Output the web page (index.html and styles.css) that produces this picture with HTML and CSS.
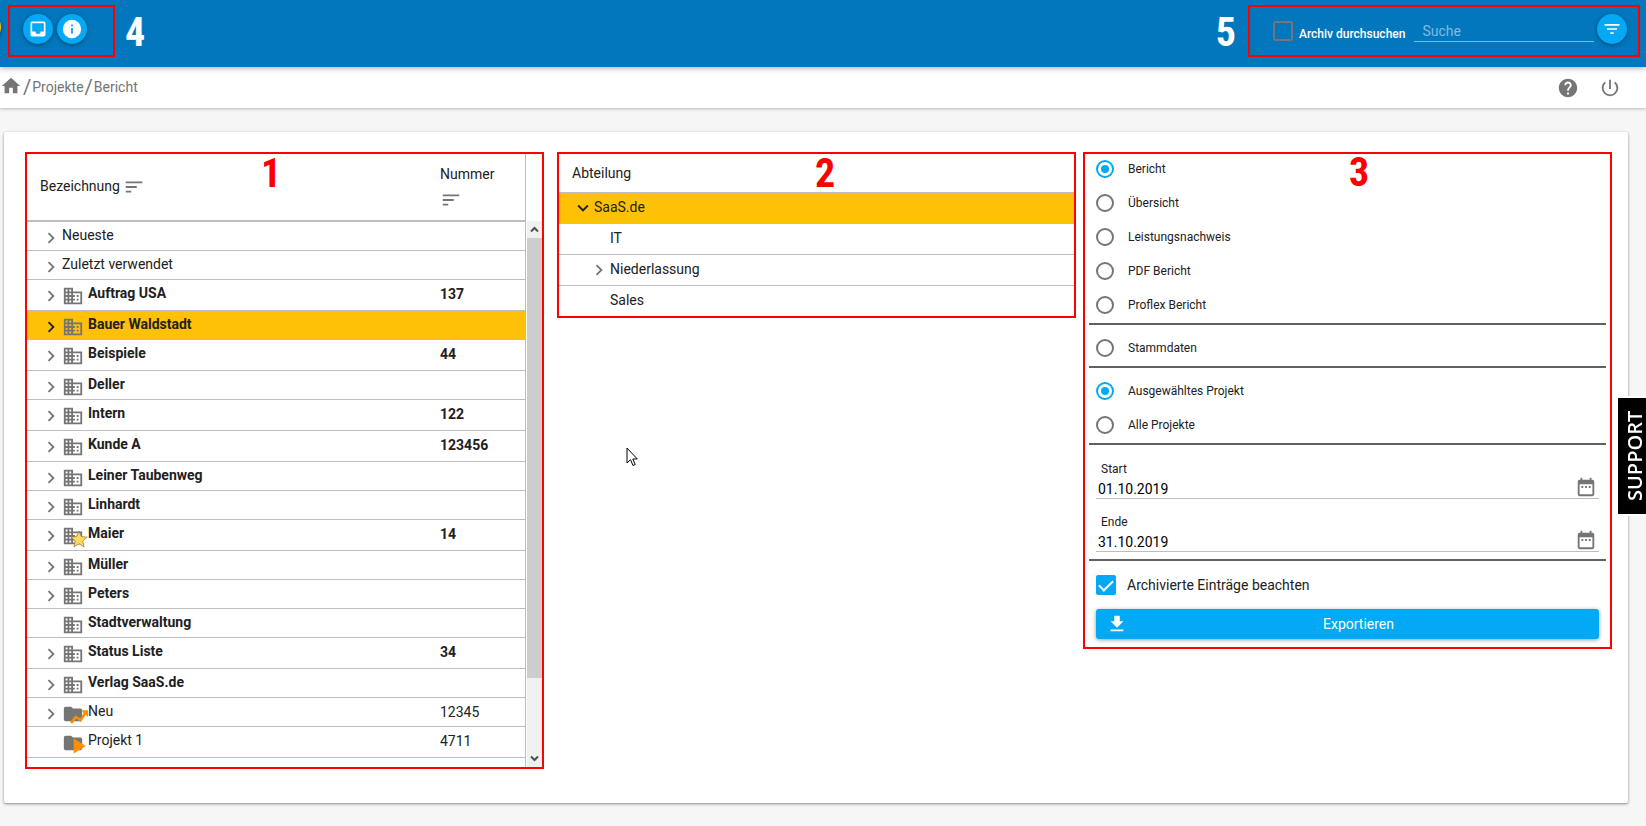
FILE: index.html
```html
<!DOCTYPE html>
<html lang="de">
<head>
<meta charset="utf-8">
<title>Bericht</title>
<link rel="stylesheet" href="styles.css">
</head>
<body>
<svg class="sprite" aria-hidden="true">
  <symbol id="inbox" viewBox="0 0 24 24"><path d="M19 3H5a2 2 0 0 0-2 2v14a2 2 0 0 0 2 2h14a2 2 0 0 0 2-2V5a2 2 0 0 0-2-2zm0 12h-4a3 3 0 0 1-6 0H5V5h14v10z"/></symbol>
  <symbol id="info" viewBox="0 0 24 24"><path d="M12 2a10 10 0 1 0 0 20 10 10 0 0 0 0-20zm1 15h-2v-6h2v6zm0-8h-2V7h2v2z"/></symbol>
  <symbol id="filter" viewBox="0 0 24 24"><path d="M10 18h4v-2h-4v2zM3 6v2h18V6H3zm3 7h12v-2H6v2z"/></symbol>
  <symbol id="home" viewBox="0 0 24 24"><path d="M10 20v-6h4v6h5v-8h3L12 3 2 12h3v8z"/></symbol>
  <symbol id="help" viewBox="0 0 24 24"><path d="M12 2C6.480 2 2 6.480 2 12s4.480 10 10 10 10-4.480 10-10S17.520 2 12 2zm1 17h-2v-2h2v2zm2.070-7.750l-.9.920C13.450 12.900 13 13.500 13 15h-2v-.5c0-1.100.450-2.100 1.170-2.830l1.240-1.260c.370-.360.590-.860.590-1.410 0-1.100-.9-2-2-2s-2 .9-2 2H8c0-2.210 1.790-4 4-4s4 1.790 4 4c0 .880-.360 1.680-.930 2.250z"/></symbol>
  <symbol id="power" viewBox="0 0 24 24"><path d="M13 3h-2v10h2V3zm4.830 2.170l-1.420 1.420A6.920 6.920 0 0 1 19 12a7 7 0 1 1-11.420-5.420L6.170 5.170A8.930 8.930 0 0 0 3 12a9 9 0 0 0 18 0c0-2.740-1.230-5.180-3.170-6.830z"/></symbol>
  <symbol id="sort" viewBox="0 0 24 24"><path d="M3 18h6v-2H3v2zM3 6v2h18V6H3zm0 7h12v-2H3v2z"/></symbol>
  <symbol id="right" viewBox="0 0 24 24"><path d="M10 6L8.590 7.410 13.170 12l-4.580 4.590L10 18l6-6z"/></symbol>
  <symbol id="down" viewBox="0 0 24 24"><path d="M16.590 8.590L12 13.170 7.410 8.590 6 10l6 6 6-6z"/></symbol>
  <symbol id="company" viewBox="0 0 24 24"><path d="M12 7V3H2v18h20V7H12zM6 19H4v-2h2v2zm0-4H4v-2h2v2zm0-4H4V9h2v2zm0-4H4V5h2v2zm4 12H8v-2h2v2zm0-4H8v-2h2v2zm0-4H8V9h2v2zm0-4H8V5h2v2zm10 12h-8v-2h2v-2h-2v-2h2v-2h-2V9h8v10zm-2-8h-2v2h2v-2zm0 4h-2v2h2v-2z"/></symbol>
  <symbol id="folder" viewBox="0 0 24 24"><path d="M10 4H4a2 2 0 0 0-2 2v12a2 2 0 0 0 2 2h16a2 2 0 0 0 2-2V8a2 2 0 0 0-2-2h-8l-2-2z"/></symbol>
  <symbol id="star" viewBox="0 0 24 24"><path d="M12 1.500l3.100 7.300 7.900.7-6 5.200 1.800 7.800-6.800-4.100-6.800 4.100L7 14.700 1 9.500l7.900-.7z"/></symbol>
  <symbol id="trend" viewBox="0 0 24 24"><path d="M15 3h9v9l-3-3-6.500 9.500-6-4.500L3 21l-3-2 7.500-9.500 6.200 4.500 4.500-7.500z"/></symbol>
  <symbol id="play" viewBox="0 0 24 24"><path d="M5 2v20l16-10z"/></symbol>
  <symbol id="calendar" viewBox="0 0 24 24"><path d="M9 11H7v2h2v-2zm4 0h-2v2h2v-2zm4 0h-2v2h2v-2zm2-7h-1V2h-2v2H8V2H6v2H5a2 2 0 0 0-2 2v14a2 2 0 0 0 2 2h14a2 2 0 0 0 2-2V6a2 2 0 0 0-2-2zm0 16H5V9h14v11z"/></symbol>
  <symbol id="download" viewBox="0 0 24 24"><path d="M19 9h-4V3H9v6H5l7 7 7-7zM5 18v2h14v-2H5z"/></symbol>
</svg>

<header class="topbar">
  <span class="edge-dot"></span>
  <div class="frame frame-actions">
    <button class="round" aria-label="Posteingang"><svg class="icon-20"><use href="#inbox"/></svg></button>
    <button class="round" aria-label="Information"><svg class="icon-22"><use href="#info"/></svg></button>
  </div>
  <span class="mark">4</span>
  <span class="mark mark-end">5</span>
  <form class="frame frame-search">
    <input class="check archive-check" type="checkbox" id="archive">
    <label class="archive-label" for="archive">Archiv durchsuchen</label>
    <input class="search" type="text" placeholder="Suche" aria-label="Suche">
    <button class="round" type="button" aria-label="Filter"><svg class="icon-20"><use href="#filter"/></svg></button>
  </form>
</header>

<nav class="crumbs">
  <a class="crumb-home" href="#" aria-label="Start"><svg class="icon-22"><use href="#home"/></svg></a>
  <span class="slash">/</span><a href="#">Projekte</a><span class="slash">/</span><a href="#">Bericht</a>
  <div class="crumb-tools">
    <button class="plain" aria-label="Hilfe"><svg class="icon-22"><use href="#help"/></svg></button>
    <button class="plain" aria-label="Abmelden"><svg class="icon-22"><use href="#power"/></svg></button>
  </div>
</nav>

<main class="card">
  <section class="panel panel-projects">
    <span class="panel-mark mark-projects">1</span>
    <div class="table-wrap">
      <table class="tree">
        <thead>
          <tr>
            <th>Bezeichnung <svg class="icon-22 sort"><use href="#sort"/></svg></th>
            <th class="num">Nummer<svg class="icon-22 sort below"><use href="#sort"/></svg></th>
          </tr>
        </thead>
        <tbody>
          <tr><td><div class="branch"><button class="plain" aria-label="Aufklappen"><svg class="icon-22"><use href="#right"/></svg></button>Neueste</div></td><td></td></tr>
          <tr><td><div class="branch"><button class="plain" aria-label="Aufklappen"><svg class="icon-22"><use href="#right"/></svg></button>Zuletzt verwendet</div></td><td></td></tr>
          <tr class="bold tall"><td><div class="branch"><button class="plain" aria-label="Aufklappen"><svg class="icon-22"><use href="#right"/></svg></button><span class="kind"><svg class="icon-22"><use href="#company"/></svg></span>Auftrag USA</div></td><td>137</td></tr>
          <tr class="bold selected"><td><div class="branch"><button class="plain" aria-label="Aufklappen"><svg class="icon-22"><use href="#right"/></svg></button><span class="kind"><svg class="icon-22"><use href="#company"/></svg></span>Bauer Waldstadt</div></td><td></td></tr>
          <tr class="bold tall"><td><div class="branch"><button class="plain" aria-label="Aufklappen"><svg class="icon-22"><use href="#right"/></svg></button><span class="kind"><svg class="icon-22"><use href="#company"/></svg></span>Beispiele</div></td><td>44</td></tr>
          <tr class="bold"><td><div class="branch"><button class="plain" aria-label="Aufklappen"><svg class="icon-22"><use href="#right"/></svg></button><span class="kind"><svg class="icon-22"><use href="#company"/></svg></span>Deller</div></td><td></td></tr>
          <tr class="bold tall"><td><div class="branch"><button class="plain" aria-label="Aufklappen"><svg class="icon-22"><use href="#right"/></svg></button><span class="kind"><svg class="icon-22"><use href="#company"/></svg></span>Intern</div></td><td>122</td></tr>
          <tr class="bold tall"><td><div class="branch"><button class="plain" aria-label="Aufklappen"><svg class="icon-22"><use href="#right"/></svg></button><span class="kind"><svg class="icon-22"><use href="#company"/></svg></span>Kunde A</div></td><td>123456</td></tr>
          <tr class="bold"><td><div class="branch"><button class="plain" aria-label="Aufklappen"><svg class="icon-22"><use href="#right"/></svg></button><span class="kind"><svg class="icon-22"><use href="#company"/></svg></span>Leiner Taubenweg</div></td><td></td></tr>
          <tr class="bold"><td><div class="branch"><button class="plain" aria-label="Aufklappen"><svg class="icon-22"><use href="#right"/></svg></button><span class="kind"><svg class="icon-22"><use href="#company"/></svg></span>Linhardt</div></td><td></td></tr>
          <tr class="bold tall"><td><div class="branch"><button class="plain" aria-label="Aufklappen"><svg class="icon-22"><use href="#right"/></svg></button><span class="kind"><svg class="icon-22"><use href="#company"/></svg><svg class="badge star"><use href="#star"/></svg></span>Maier</div></td><td>14</td></tr>
          <tr class="bold"><td><div class="branch"><button class="plain" aria-label="Aufklappen"><svg class="icon-22"><use href="#right"/></svg></button><span class="kind"><svg class="icon-22"><use href="#company"/></svg></span>Müller</div></td><td></td></tr>
          <tr class="bold"><td><div class="branch"><button class="plain" aria-label="Aufklappen"><svg class="icon-22"><use href="#right"/></svg></button><span class="kind"><svg class="icon-22"><use href="#company"/></svg></span>Peters</div></td><td></td></tr>
          <tr class="bold"><td><div class="branch leaf"><span class="kind"><svg class="icon-22"><use href="#company"/></svg></span>Stadtverwaltung</div></td><td></td></tr>
          <tr class="bold tall"><td><div class="branch"><button class="plain" aria-label="Aufklappen"><svg class="icon-22"><use href="#right"/></svg></button><span class="kind"><svg class="icon-22"><use href="#company"/></svg></span>Status Liste</div></td><td>34</td></tr>
          <tr class="bold"><td><div class="branch"><button class="plain" aria-label="Aufklappen"><svg class="icon-22"><use href="#right"/></svg></button><span class="kind"><svg class="icon-22"><use href="#company"/></svg></span>Verlag SaaS.de</div></td><td></td></tr>
          <tr><td><div class="branch"><button class="plain" aria-label="Aufklappen"><svg class="icon-22"><use href="#right"/></svg></button><span class="kind"><svg class="icon-22"><use href="#folder"/></svg><svg class="badge orange"><use href="#trend"/></svg></span>Neu</div></td><td>12345</td></tr>
          <tr class="tall"><td><div class="branch leaf"><span class="kind"><svg class="icon-22"><use href="#folder"/></svg><svg class="badge orange"><use href="#play"/></svg></span>Projekt 1</div></td><td>4711</td></tr>
          <tr><td></td><td></td></tr>
        </tbody>
      </table>
    </div>
    <div class="scrollbar">
      <svg class="arrow" viewBox="0 0 15 17"><path d="M4 10.500l3.500-3.500 3.500 3.500"/></svg>
      <div class="track"><div class="thumb"></div></div>
      <svg class="arrow" viewBox="0 0 15 17"><path d="M4 6.500l3.500 3.500 3.500-3.500"/></svg>
    </div>
  </section>

  <section class="panel panel-units">
    <span class="panel-mark mark-units">2</span>
    <table class="tree units">
      <thead><tr><th>Abteilung</th></tr></thead>
      <tbody>
        <tr class="selected"><td><div class="branch"><button class="plain" aria-label="Zuklappen"><svg class="icon-22"><use href="#down"/></svg></button>SaaS.de</div></td></tr>
        <tr><td><div class="branch child leaf">IT</div></td></tr>
        <tr><td><div class="branch child"><button class="plain" aria-label="Aufklappen"><svg class="icon-22"><use href="#right"/></svg></button>Niederlassung</div></td></tr>
        <tr><td><div class="branch child leaf">Sales</div></td></tr>
      </tbody>
    </table>
  </section>

  <form class="panel panel-report">
    <span class="panel-mark mark-report">3</span>
    <div class="group options first">
      <label class="option"><input type="radio" name="kind" checked>Bericht</label>
      <label class="option"><input type="radio" name="kind">Übersicht</label>
      <label class="option"><input type="radio" name="kind">Leistungsnachweis</label>
      <label class="option"><input type="radio" name="kind">PDF Bericht</label>
      <label class="option"><input type="radio" name="kind">Proflex Bericht</label>
    </div>
    <div class="group options">
      <label class="option"><input type="radio" name="kind">Stammdaten</label>
    </div>
    <div class="group options">
      <label class="option"><input type="radio" name="scope" checked>Ausgewähltes Projekt</label>
      <label class="option"><input type="radio" name="scope">Alle Projekte</label>
    </div>
    <div class="group dates">
      <div class="field">
        <label for="start">Start</label>
        <div class="field-line"><input type="text" id="start" value="01.10.2019"><button class="plain" type="button" aria-label="Kalender"><svg class="icon-22"><use href="#calendar"/></svg></button></div>
      </div>
      <div class="field">
        <label for="end">Ende</label>
        <div class="field-line"><input type="text" id="end" value="31.10.2019"><button class="plain" type="button" aria-label="Kalender"><svg class="icon-22"><use href="#calendar"/></svg></button></div>
      </div>
    </div>
    <div class="finish">
      <label class="archived"><input class="check" type="checkbox" checked>Archivierte Einträge beachten</label>
      <button class="export" type="button"><svg class="icon-22"><use href="#download"/></svg><span>Exportieren</span></button>
    </div>
  </form>
</main>

<a class="support" href="#">SUPPORT</a>
<svg class="cursor" viewBox="0 0 12 20"><path d="M1 1v15l3.500-3.300L7 18.500l2.200-1L6.800 12h4.500z"/></svg>
</body>
</html>
```
FILE: styles.css
```css
* { box-sizing: border-box; }

body {
  margin: 0;
  min-height: 100vh;
  background: #f6f6f6;
  color: #212121;
  font: 14px/20px Roboto, "Liberation Sans", sans-serif;
  overflow: hidden;
}

button, input { font: inherit; color: inherit; }
button { border: 0; padding: 0; cursor: pointer; }
a { color: inherit; text-decoration: none; }
svg { fill: currentColor; flex: none; display: block; }

.sprite { position: absolute; width: 0; height: 0; }
.icon-20 { width: 20px; height: 20px; }
.icon-22 { width: 22px; height: 22px; }
.plain { background: none; color: #757575; display: flex; }

/* Top bar */
.topbar {
  position: relative;
  z-index: 1;
  display: flex;
  align-items: flex-start;
  height: 67px;
  padding: 5px 6px 0 8px;
  background: #0277bd;
  color: #fff;
  box-shadow: 0 1px 6px rgba(0, 0, 0, .35);
}
.edge-dot {
  position: absolute;
  left: -29px;
  top: 12px;
  width: 30px;
  height: 30px;
  border-radius: 50%;
  background: #ffc107;
  box-shadow: 0 2px 4px rgba(0, 0, 0, .4);
}
.frame {
  display: flex;
  align-items: center;
  height: 52px;
  border: 2px solid #f00;
}
.frame-actions { width: 107px; gap: 4px; padding: 0 0 4px 13px; }
.frame-search { width: 392px; padding: 0 11px 4px 23px; }
.round {
  display: flex;
  align-items: center;
  justify-content: center;
  flex: none;
  width: 30px;
  height: 30px;
  border-radius: 50%;
  background: #03a9f4;
  color: #fff;
  box-shadow: 0 1px 4px rgba(0, 0, 0, .4);
}
.mark, .panel-mark {
  font: bold 40px/52px "Roboto Condensed", Roboto, sans-serif;
}
.mark { margin-left: 10px; line-height: 56px; }
.mark-end { margin-left: auto; margin-right: 12px; }

.check {
  appearance: none;
  flex: none;
  width: 20px;
  height: 20px;
  margin: 0;
  border: 2px solid #757575;
  border-radius: 2px;
}
.check:checked {
  display: grid;
  place-items: center;
  border-color: #03a9f4;
  background: #03a9f4;
}
.check:checked::after {
  content: "";
  width: 6px;
  height: 12px;
  margin-bottom: 3px;
  border: solid #fff;
  border-width: 0 2px 2px 0;
  transform: rotate(45deg);
}
.archive-check { margin-top: 4px; }
.archive-label { margin: 10px 9px 0 6px; font-size: 12px; font-weight: 500; white-space: nowrap; }
.search {
  flex: 1;
  min-width: 0;
  height: 24px;
  margin: 2px 3px 0 0;
  padding: 3px 8px 0;
  border: 0;
  border-bottom: 1px solid #81bbde;
  background: none;
  outline: 0;
}
.search::placeholder { color: #81bbde; opacity: 1; }

/* Breadcrumbs */
.crumbs {
  display: flex;
  align-items: center;
  height: 41px;
  padding: 0 25px 2px 0;
  background: #fff;
  color: #757575;
  box-shadow: 0 1px 3px rgba(0, 0, 0, .25);
}
.crumb-home { padding-bottom: 2px; }
.slash { padding: 0 1px; font-size: 20px; }
.crumb-tools { display: flex; gap: 20px; margin: 2px 0 0 auto; }

/* Card and panels */
.card {
  display: grid;
  grid-template-columns: 519fr 519fr 529fr;
  column-gap: 10px;
  align-items: start;
  margin: 24px 18px 0 4px;
  padding: 20px 16px 34px 21px;
  border-radius: 2px;
  background: #fff;
  box-shadow: 0 1px 3px rgba(0, 0, 0, .45);
}
.panel { position: relative; border: 2px solid #f00; }
.panel-mark { position: absolute; top: -6px; z-index: 1; color: #f00; }
.mark-projects { left: 234px; }
.mark-units { left: 256px; }
.mark-report { left: 264px; top: -7px; }

.panel-projects {
  display: flex;
  height: calc(100vh - 209px);
}
.panel-units { margin-left: 3px; margin-right: -3px; }
.table-wrap { flex: 1; overflow: hidden; border-right: 1px solid #bdbdbd; }
.tree { width: 100%; border-collapse: separate; border-spacing: 0; }
.tree th {
  height: 68px;
  padding: 0 13px;
  border-bottom: 2px solid #bdbdbd;
  font-weight: 400;
  text-align: left;
}
.tree .num { width: 98px; }
.sort { display: inline-block; vertical-align: middle; color: #757575; }
.below { display: block; margin-top: 5px; }
.tree td {
  height: 29px;
  padding: 0 13px;
  border-bottom: 1px solid #bdbdbd;
  line-height: 28px;
  vertical-align: top;
}
.tree .tall td { height: 31px; }
.tree .bold { font-weight: 700; }
.tree .selected { background: #ffc107; }
.branch { display: flex; align-items: center; height: 27px; line-height: 27px; }
.branch > .plain, .kind { margin-top: 5px; }
.leaf { padding-left: 22px; }
.selected .plain { color: #212121; }
.kind { position: relative; margin-right: 4px; color: #757575; }
.badge { position: absolute; left: 8px; top: 5px; width: 18px; height: 18px; }
.star { color: #ffd95a; stroke: #8d7b4a; stroke-width: 1px; }
.orange { color: #ff8f00; }

.scrollbar {
  display: flex;
  flex-direction: column;
  width: 15px;
  margin: 67px 0 0 1px;
  background: #f0f0f0;
}
.arrow { width: 15px; height: 17px; fill: none; stroke: #505050; stroke-width: 2px; }
.track { flex: 1; }
.thumb { height: 86%; background: #cdcdcd; }

.units th { height: 39px; border-bottom-width: 1px; }
.units td { height: 31px; }
.units tr:last-child td { height: 30px; border-bottom: 0; }
.units .branch { height: 28px; }
.units .branch > .plain { margin-top: 2px; }
.units .child { padding-left: 16px; }
.units .child.leaf { padding-left: 38px; }

/* Report form */
.panel-report { padding: 0 4px 8px; }
.group {
  padding: 0 7px;
  border-bottom: 2px solid #616161;
}
.options { display: grid; gap: 14px; padding-top: 13px; padding-bottom: 8px; }
.first { padding-top: 5px; }
.option {
  display: flex;
  align-items: center;
  gap: 14px;
  font-size: 12px;
}
.option input {
  display: grid;
  place-items: center;
  appearance: none;
  width: 18px;
  height: 18px;
  margin: 0;
  border: 2px solid #757575;
  border-radius: 50%;
}
.option input:checked { border-color: #03a9f4; }
.option input:checked::after {
  content: "";
  width: 8px;
  height: 8px;
  border-radius: 50%;
  background: #03a9f4;
}
.dates { display: grid; gap: 13px; padding-top: 14px; padding-bottom: 7px; }
.field label { display: block; padding-left: 5px; font-size: 12px; }
.field-line {
  display: flex;
  align-items: center;
  height: 20px;
  border-bottom: 1px solid #bdbdbd;
}
.field-line input {
  flex: 1;
  min-width: 0;
  padding: 0 2px;
  border: 0;
  background: none;
  color: #000;
  outline: 0;
}
.field-line .plain { margin: 0 2px 3px 0; }
.finish { padding: 14px 7px 0; }
.archived { display: flex; align-items: center; gap: 11px; }
.export {
  display: flex;
  align-items: center;
  width: 100%;
  height: 30px;
  margin-top: 14px;
  padding: 0 10px;
  border-radius: 3px;
  background: #03a9f4;
  color: #fff;
  box-shadow: 0 1px 4px rgba(0, 0, 0, .4);
}
.export span { flex: 1; }

.support {
  position: fixed;
  right: 0;
  top: 398px;
  height: 116px;
  width: 28px;
  padding-right: 7px;
  background: #000;
  box-shadow: 0 0 0 2px #fff;
  color: #fff;
  font: 600 20px/20px "Open Sans", "Noto Sans", sans-serif;
  text-align: center;
  writing-mode: vertical-rl;
  transform: rotate(180deg);
}
.cursor {
  position: absolute;
  left: 626px;
  top: 447px;
  width: 12px;
  height: 20px;
  fill: #fff;
  stroke: #000;
}
```
